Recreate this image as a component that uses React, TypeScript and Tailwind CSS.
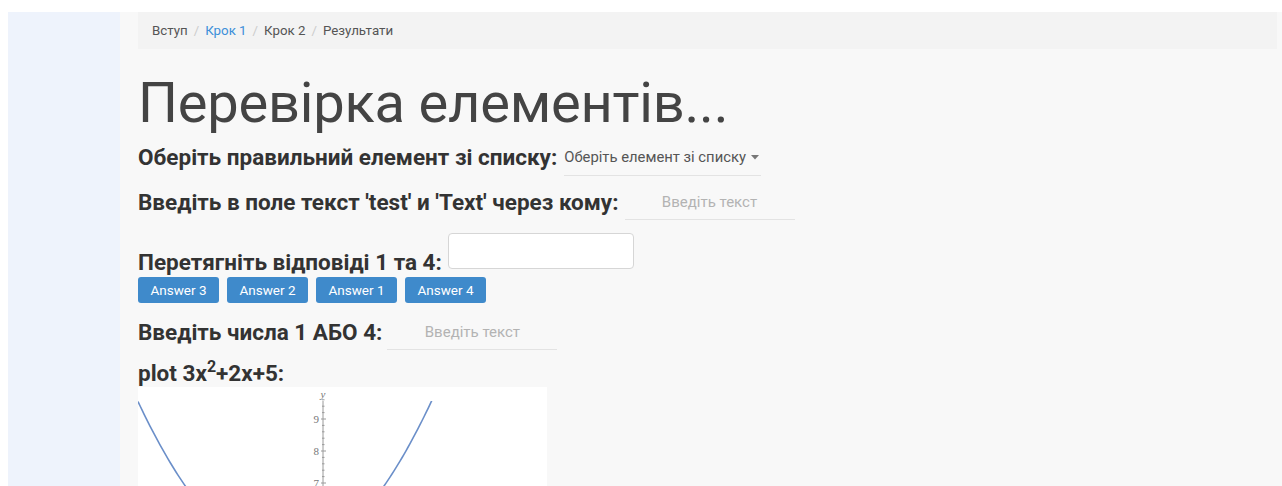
import React from "react";

const font = { fontFamily: "Roboto, 'Noto Sans', sans-serif" };

function Plot() {
  // y = 3x^2 + 2x + 5, drawn with 115px per x unit and 32px per y unit
  const pts: string[] = [];
  for (let sx = 0; sx <= 409; sx += 2) {
    const x = (sx - 185) / 115;
    const y = 3 * x * x + 2 * x + 5;
    const sy = 320 - 32 * y;
    pts.push(`${sx},${sy.toFixed(2)}`);
  }
  const ticks: number[] = [];
  for (let v = 6.4; v <= 9.6; v += 0.2) ticks.push(v);
  return (
    <svg width="409" height="99" viewBox="0 0 409 99" className="block bg-white">
      <defs>
        <clipPath id="plotArea">
          <rect x="0" y="14" width="409" height="99" />
        </clipPath>
      </defs>
      <line x1="185" y1="14" x2="185" y2="99" stroke="#9a9a9a" strokeWidth="1" />
      {ticks.map((v, i) => {
        const ty = 320 - 32 * v;
        const major = Math.abs(v - Math.round(v)) < 0.01;
        return (
          <line
            key={i}
            x1={major ? 183 : 184}
            x2={major ? 188 : 186.5}
            y1={ty}
            y2={ty}
            stroke="#9a9a9a"
            strokeWidth="1"
          />
        );
      })}
      {[9, 8, 7].map((v) => (
        <text
          key={v}
          x="181"
          y={320 - 32 * v + 4}
          textAnchor="end"
          fontSize="11"
          fill="#777"
          fontFamily="'Liberation Serif', serif"
        >
          {v}
        </text>
      ))}
      <text
        x="185"
        y="11"
        textAnchor="middle"
        fontSize="11"
        fontStyle="italic"
        fill="#777"
        fontFamily="'Liberation Serif', serif"
      >
        y
      </text>
      <polyline
        points={pts.join(" ")}
        fill="none"
        stroke="#6b8fc9"
        strokeWidth="1.6"
        clipPath="url(#plotArea)"
      />
    </svg>
  );
}

function LineInput({ width }: { width: string }) {
  return (
    <input
      placeholder="Введіть текст"
      className={`${width} h-[36px] bg-transparent border-0 border-b border-[#e3e3e3] text-center text-[15px] text-[#555] placeholder:text-[#b3b3b3] outline-none`}
      style={font}
    />
  );
}

export default function App() {
  const answers = ["Answer 3", "Answer 2", "Answer 1", "Answer 4"];
  return (
    <div className="min-h-[486px] bg-white pt-3 pl-2 flex" style={font}>
      <aside className="w-[112px] bg-[#eef3fc] shrink-0" />
      <main className="flex-1 bg-[#f8f8f8] pl-[18px] pr-[5px] min-h-[474px]">
        <nav className="h-[37px] bg-[#f3f3f3] flex items-center px-[14px] text-[13.3px] text-[#555]">
          <span>Вступ</span>
          <span className="px-[6px] text-[#ccc]">/</span>
          <a className="text-[#3d8fd9]">Крок 1</a>
          <span className="px-[6px] text-[#ccc]">/</span>
          <span>Крок 2</span>
          <span className="px-[6px] text-[#ccc]">/</span>
          <span>Результати</span>
        </nav>

        <h1 className="mt-[23px] text-[56px] leading-[62px] font-normal text-[#444] tracking-[-0.2px]">
          Перевірка елементів...
        </h1>

        <div className="flex items-center gap-[7px] mt-[4px]">
          <span className="text-[22.5px] font-bold text-[#333] leading-[28px]">
            Оберіть правильний елемент зі списку:
          </span>
          <button className="flex items-center gap-[5px] h-[38px] pt-[2px] text-[14.8px] text-[#555] border-b border-[#e3e3e3] w-[197px]">
            <span>Оберіть елемент зі списку</span>
            <svg width="8" height="5" viewBox="0 0 8 5">
              <path d="M0 0h8L4 4.5z" fill="#777" />
            </svg>
          </button>
        </div>

        <div className="flex items-center gap-[6px] mt-[8px]">
          <span className="text-[22.5px] font-bold text-[#333] leading-[28px]">
            Введіть в поле текст 'test' и 'Text' через кому:
          </span>
          <LineInput width="w-[170px]" />
        </div>

        <div className="flex items-end gap-[6px] mt-[13px]">
          <span className="text-[22.5px] font-bold text-[#333] leading-[28px]">
            Перетягніть відповіді 1 та 4:
          </span>
          <div className="w-[186px] h-[36px] bg-white border border-[#d6d6d6] rounded-[4px] mb-[7px]" />
        </div>

        <div className="flex gap-[8px] mt-[1px]">
          {answers.map((a) => (
            <button
              key={a}
              className="h-[26px] rounded-[3px] bg-[#3f8acb] text-white text-[13.5px] w-[81px]"
            >
              {a}
            </button>
          ))}
        </div>

        <div className="flex items-center gap-[5px] mt-[11px]">
          <span className="text-[22.5px] font-bold text-[#333] leading-[28px]">
            Введіть числа 1 АБО 4:
          </span>
          <LineInput width="w-[170px]" />
        </div>

        <div className="text-[22.5px] font-bold text-[#333] leading-[28px] mt-[9px]">
          plot 3x<sup className="text-[16px] -top-[9px]">2</sup>+2x+5:
        </div>

        <Plot />
      </main>
    </div>
  );
}
